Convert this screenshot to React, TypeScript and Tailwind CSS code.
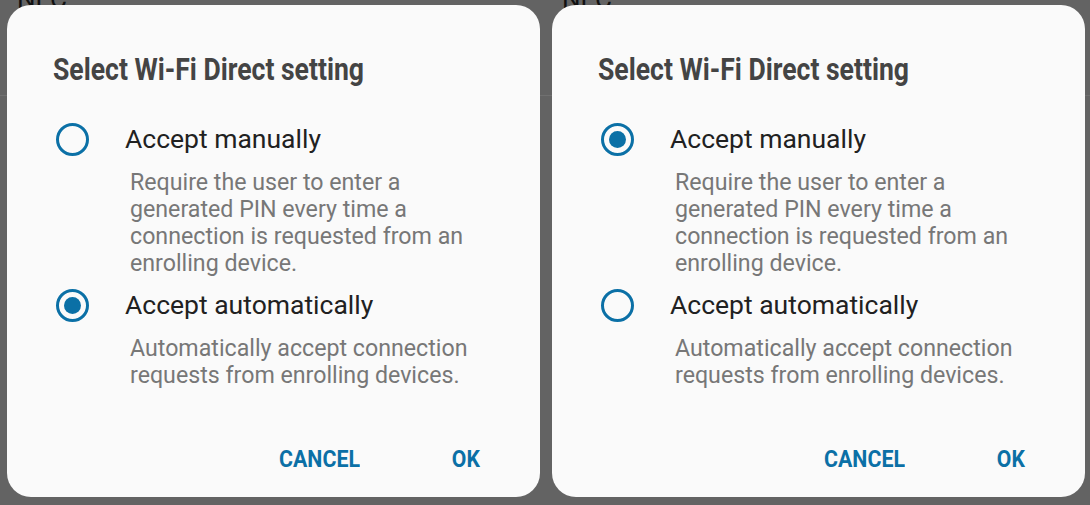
import React from "react";

type Option = {
  label: string;
  desc: string[];
};

const options: Option[] = [
  {
    label: "Accept manually",
    desc: [
      "Require the user to enter a",
      "generated PIN every time a",
      "connection is requested from an",
      "enrolling device.",
    ],
  },
  {
    label: "Accept automatically",
    desc: ["Automatically accept connection", "requests from enrolling devices."],
  },
];

const Radio = ({ checked }: { checked: boolean }) => (
  <span className="flex h-[33px] w-[33px] items-center justify-center rounded-full border-[3px] border-[#0b70a6]">
    {checked && <span className="h-[17px] w-[17px] rounded-full bg-[#0b70a6]" />}
  </span>
);

const Dialog = ({ selected }: { selected: number }) => {
  return (
    <div className="relative z-10 flex h-[492px] w-[533px] flex-col rounded-[24px] bg-[#fafafa] pl-[46px]">
      <h2 className="mt-[45px] h-[38px] origin-left scale-x-[0.83] whitespace-nowrap font-['Roboto'] text-[32px] font-bold leading-[38px] text-[#444444]">
        Select Wi-Fi Direct setting
      </h2>

      {options.map((opt, i) => (
        <div key={opt.label} className={i === 0 ? "mt-[35px]" : "mt-[12px]"}>
          <div className="flex h-[32px] items-center">
            <span className="ml-[3px] flex w-[69px] items-center">
              <Radio checked={selected === i} />
            </span>
            <span className="font-['Roboto'] text-[26.5px] leading-[32px] text-[#212121]">
              {opt.label}
            </span>
          </div>
          <div className="mt-[14px] pl-[77px] font-['Roboto'] text-[23.2px] leading-[27px] text-[#777777]">
            {opt.desc.map((line) => (
              <div key={line} className="whitespace-nowrap">
                {line}
              </div>
            ))}
          </div>
        </div>
      ))}

      <div className="mt-auto mb-[22px] flex h-[32px] items-center justify-end gap-[88px] pr-[60px] font-['Roboto'] text-[24px] font-bold leading-[32px] text-[#0b70a6]">
        <span className="origin-right scale-x-[0.89]">CANCEL</span>
        <span className="origin-right scale-x-[0.88]">OK</span>
      </div>
    </div>
  );
};

export default function App() {
  return (
    <div className="relative h-[505px] w-[1090px] overflow-hidden bg-[#636363]">
      {/* what lies behind the dialogs */}
      <div className="absolute left-0 top-[95px] h-px w-full bg-[#707070]" />
      <span className="absolute left-[17px] top-[-20px] font-['Roboto'] text-[26px] text-[#111]">
        NFC
      </span>
      <span className="absolute left-[562px] top-[-20px] font-['Roboto'] text-[26px] text-[#111]">
        NFC
      </span>

      <div className="flex gap-[12px] pl-[7px] pt-[5px]">
        <Dialog selected={1} />
        <Dialog selected={0} />
      </div>
    </div>
  );
}
